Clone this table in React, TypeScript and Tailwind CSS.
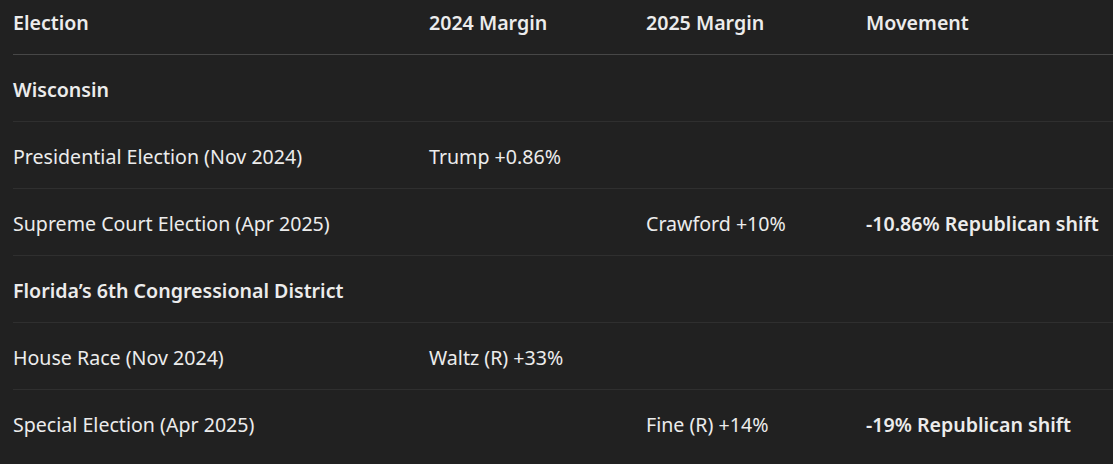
const rows: { cells: string[]; group?: boolean }[] = [
  { cells: ["Wisconsin", "", "", ""], group: true },
  { cells: ["Presidential Election (Nov 2024)", "Trump +0.86%", "", ""] },
  { cells: ["Supreme Court Election (Apr 2025)", "", "Crawford +10%", "-10.86% Republican shift"] },
  { cells: ["Florida’s 6th Congressional District", "", "", ""], group: true },
  { cells: ["House Race (Nov 2024)", "Waltz (R) +33%", "", ""] },
  { cells: ["Special Election (Apr 2025)", "", "Fine (R) +14%", "-19% Republican shift"] },
];

const headers = ["Election", "2024 Margin", "2025 Margin", "Movement"];

export default function App() {
  return (
    <div
      className="min-h-[464px] w-[1113px] overflow-hidden bg-[#212121] pl-[13px] text-[19.6px] text-[#ececec]"
      style={{ fontFamily: '"Noto Sans", "Open Sans", sans-serif' }}
    >
      <table className="w-[1130px] table-fixed border-collapse text-left">
        <colgroup>
          <col className="w-[416px]" />
          <col className="w-[217px]" />
          <col className="w-[220px]" />
          <col />
        </colgroup>
        <thead>
          <tr className="h-[54px] border-b border-[#474747]">
            {headers.map((h) => (
              <th key={h} className="p-0 pb-[9px] font-semibold align-middle">
                {h}
              </th>
            ))}
          </tr>
        </thead>
        <tbody>
          {rows.map((row, i) => (
            <tr
              key={i}
              className={`h-[67px] ${i < rows.length - 1 ? "border-b border-[#2f2f2f]" : ""}`}
            >
              {row.cells.map((c, j) => (
                <td
                  key={j}
                  className={`p-0 pt-[4px] align-middle whitespace-nowrap ${
                    row.group || j === 3 ? "font-semibold" : "font-normal"
                  }`}
                >
                  {c}
                </td>
              ))}
            </tr>
          ))}
        </tbody>
      </table>
    </div>
  );
}
